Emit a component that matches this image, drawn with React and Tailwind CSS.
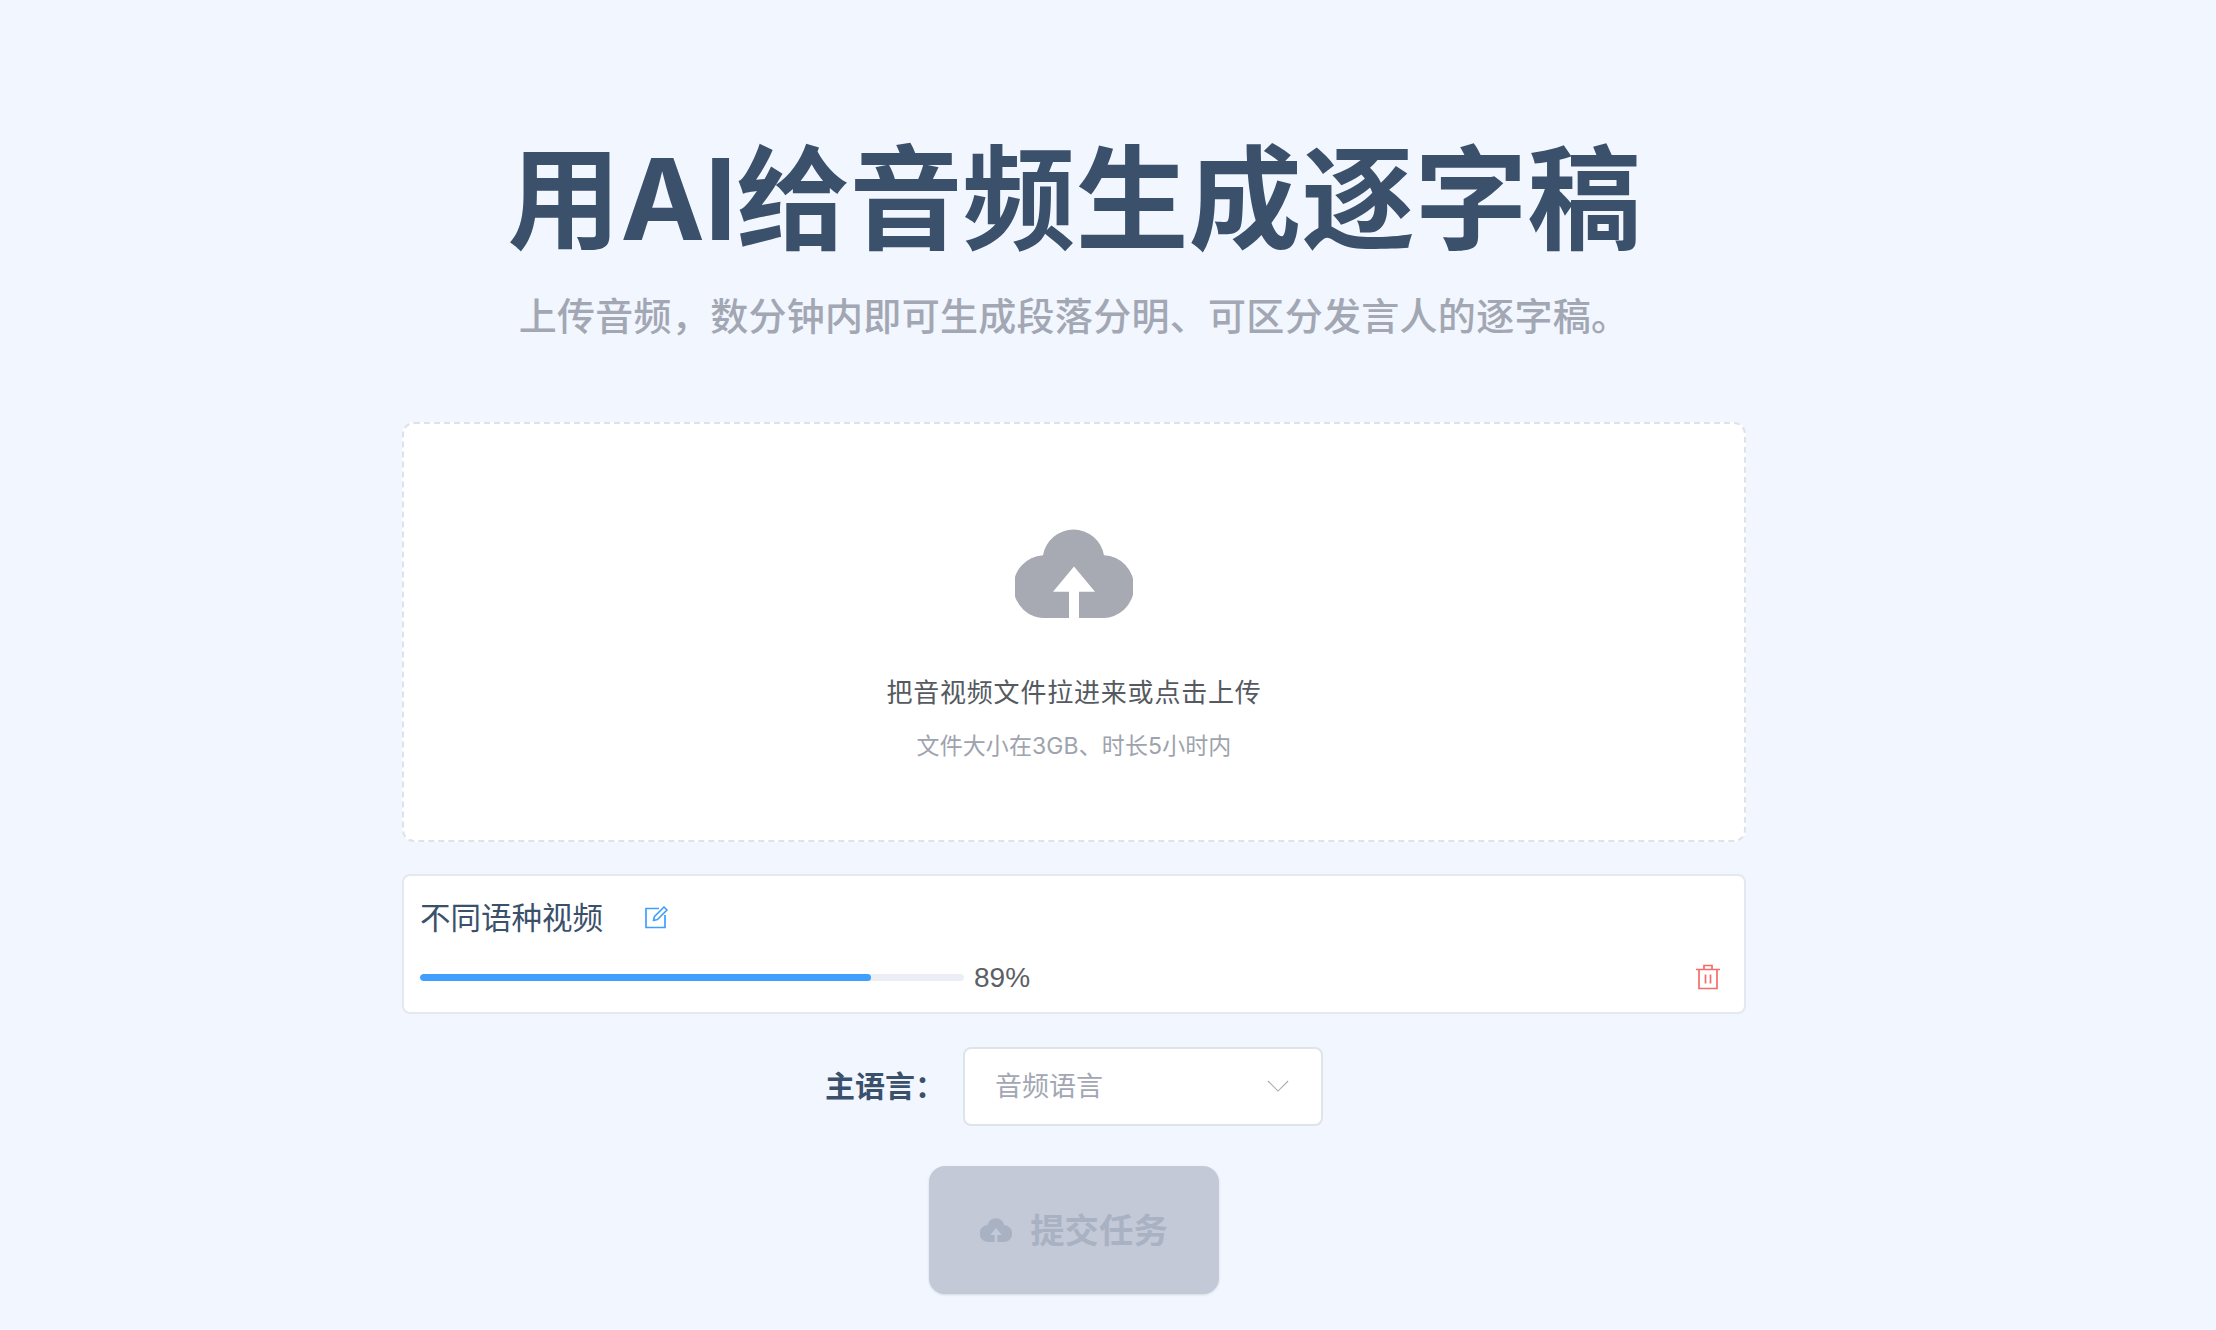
const FONT = "font-['Inter','Noto_Sans_CJK_SC',sans-serif]";

const CLOUD = 'M28 26A31 31 0 0 1 89 26A31 31 0 0 1 87 88H64V62H80L59 37L38 62H54V88H31A31 31 0 0 1 28 26Z';

function CloudUpload({ className }) {
  return (
    <svg viewBox="0 0 118 88" preserveAspectRatio="none" className={className} fill="currentColor">
      <path d={CLOUD} />
    </svg>
  );
}

function EditIcon() {
  return (
    <svg viewBox="0 0 24 24" className="w-6 h-6 text-[#409eff]" fill="none" stroke="currentColor" strokeWidth="1.7">
      <path d="M15 3.5H2v19h19V10" />
      <path d="M9.5 15.5l1-4L20 2l3 3-9.5 9.5z" strokeLinejoin="round" />
    </svg>
  );
}

function TrashIcon() {
  return (
    <svg viewBox="0 0 24 26" className="w-6 h-[26px] text-[#f56c6c]" fill="none" stroke="currentColor" strokeWidth="1.7">
      <path d="M0 5.5h24M3 5.5V24.5h18V5.5M8 5.5V1.5h8v4M9.5 10.5v9M14.5 10.5v9" />
    </svg>
  );
}

export default function App() {
  return (
    <div className={`${FONT} h-[1330px] overflow-hidden bg-[#f1f6ff] flex flex-col items-center pr-[68px]`}>
      {/* Heading */}
      <h1 className="mt-[118px] text-[113px] leading-[162px] h-[162px] font-bold text-[#3a506b]">用AI给音频生成逐字稿</h1>
      <p className="mt-[8px] text-[38px] leading-[56px] tracking-[0.3px] font-medium text-[#a2a7b3] text-center">
        上传音频，数分钟内即可生成段落分明、可区分发言人的逐字稿。
      </p>

      {/* Upload area */}
      <div className="mt-[78px] w-[1344px] h-[420px] bg-white border-2 border-dashed border-[#dfe2e9] rounded-xl flex flex-col items-center pt-[105px]">
        <CloudUpload className="w-[118px] h-[89px] text-[#a7aab2]" />
        <div className="mt-[57px] text-[26px] leading-[36px] tracking-[0.8px] text-[#555a61]">把音视频文件拉进来或点击上传</div>
        <div className="mt-[19px] text-[23px] leading-[32px] tracking-[0.1px] text-[#9ea3ad]">文件大小在3GB、时长5小时内</div>
      </div>

      {/* File row */}
      <div className="mt-[32px] w-[1344px] h-[140px] bg-white border-2 border-[#e5e8ee] rounded-lg px-4 flex flex-col">
        <div className="flex items-center h-[84px]">
          <span className="text-[30.5px] leading-[40px] text-[#3a506b]">不同语种视频</span>
          <span className="ml-[41px] mb-[3px]"><EditIcon /></span>
        </div>
        <div className="flex items-center">
          <div className="w-[544px] h-[7px] rounded-full bg-[#ebeef5] overflow-hidden">
            <div className="h-full w-[451px] rounded-full bg-[#409eff]" />
          </div>
          <span className="ml-[10px] pt-[2px] font-['Liberation_Sans',sans-serif] text-[28px] leading-[32px] text-[#5c6066]">89%</span>
          <span className="ml-auto mr-[8px]"><TrashIcon /></span>
        </div>
      </div>

      {/* Language */}
      <div className="mt-[33px] flex items-center">
        <span className="text-[30px] font-bold text-[#3a506b]">主语言：</span>
        <div className="ml-[18px] w-[360px] h-[79px] bg-white border-2 border-[#dfe3ea] rounded-lg flex items-center justify-between pl-[30px] pr-[32px]">
          <span className="pt-[2px] text-[27px] text-[#a2a7b3]">音频语言</span>
          <svg viewBox="0 0 24 14" className="w-[22px] h-[13px] text-[#a8acb4]" fill="none" stroke="currentColor" strokeWidth="1.2">
            <path d="M1 1l11 11L23 1" />
          </svg>
        </div>
      </div>

      {/* Submit */}
      <button className="mt-[40px] w-[290px] h-[128px] rounded-2xl bg-[#c3c9d7] shadow-sm flex items-center justify-center gap-[18px] text-[#a9b2c3]">
        <CloudUpload className="w-[32px] h-[24px]" />
        <span className="pt-[2px] text-[34.4px] font-bold">提交任务</span>
      </button>
    </div>
  );
}
